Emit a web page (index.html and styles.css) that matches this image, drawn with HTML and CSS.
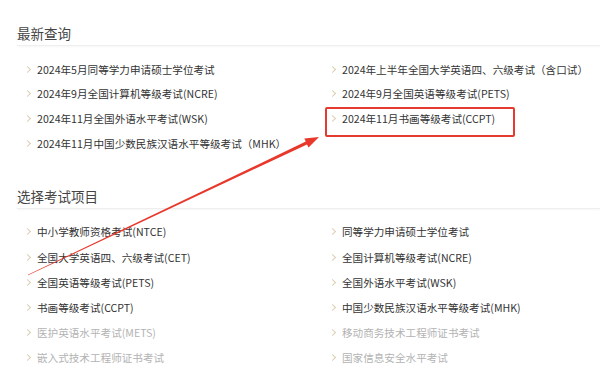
FILE: index.html
```html
<!DOCTYPE html>
<html lang="zh-CN">
<head>
    <meta charset="UTF-8">
    <meta name="viewport" content="width=device-width, initial-scale=1.0">
    <title>考试查询</title>
    <link rel="stylesheet" href="styles.css">
</head>
<body>
    <div class="page">
        <!-- 最新查询 -->
        <div class="section">
            <h2 class="section-title">最新查询</h2>
            <ul class="list list-latest">
                <li class="item">2024年5月同等学力申请硕士学位考试</li>
                <li class="item">2024年上半年全国大学英语四、六级考试（含口试）</li>
                <li class="item">2024年9月全国计算机等级考试(NCRE)</li>
                <li class="item">2024年9月全国英语等级考试(PETS)</li>
                <li class="item">2024年11月全国外语水平考试(WSK)</li>
                <li class="item marked">2024年11月书画等级考试(CCPT)</li>
                <li class="item">2024年11月中国少数民族汉语水平等级考试（MHK）</li>
            </ul>
        </div>

        <!-- 选择考试项目 -->
        <div class="section section-exams">
            <h2 class="section-title">选择考试项目</h2>
            <ul class="list">
                <li class="item">中小学教师资格考试(NTCE)</li>
                <li class="item">同等学力申请硕士学位考试</li>
                <li class="item">全国大学英语四、六级考试(CET)</li>
                <li class="item">全国计算机等级考试(NCRE)</li>
                <li class="item">全国英语等级考试(PETS)</li>
                <li class="item">全国外语水平考试(WSK)</li>
                <li class="item">书画等级考试(CCPT)</li>
                <li class="item">中国少数民族汉语水平等级考试(MHK)</li>
                <li class="item disabled">医护英语水平考试(METS)</li>
                <li class="item disabled">移动商务技术工程师证书考试</li>
                <li class="item disabled">嵌入式技术工程师证书考试</li>
                <li class="item disabled">国家信息安全水平考试</li>
            </ul>
        </div>

        <!-- 标注箭头 -->
        <svg class="annotation" width="600" height="376" viewBox="0 0 600 376">
            <polygon fill="#e8382c" points="27.9,274.7 28.1,275.3 307.0,144.4 308.5,147.5 319,137 304.3,138.5 305.8,141.6"/>
        </svg>
    </div>
</body>
</html>
```

FILE: styles.css
```css
* {
    margin: 0;
    padding: 0;
    box-sizing: border-box;
}
ul {
    list-style: none;
}
body {
    background: #fff;
    font-family: "Microsoft YaHei", "Noto Sans CJK SC", "Liberation Sans", sans-serif;
    color: #333;
}

.page {
    position: relative;
    width: 600px;
    height: 376px;
    padding: 22px 0 0 17px;
    overflow: hidden;
}
.section-title {
    height: 24px;
    font-size: 13.5px;
    font-weight: normal;
    line-height: 22px;
    color: #444;
    border-bottom: 1px solid #eee;
    box-shadow: 0 1px 2px rgba(0, 0, 0, 0.04);
}
.list {
    display: grid;
    grid-template-columns: 305px 1fr;
    padding: 11px 0 0 8px;
}
.section-exams {
    margin-top: 30px;
}
.section-exams .list {
    padding-top: 10px;
}
.item {
    position: relative;
    display: flex;
    align-items: center;
    height: 24.6px;
    font-size: 10.6px;
    color: #333;
}
.section-exams .item {
    height: 25.2px;
}
.item::before {
    content: "";
    flex: 0 0 auto;
    width: 4px;
    height: 4px;
    margin: 0 7px 0 0;
    border-top: 1.3px solid #dccfb3;
    border-right: 1.3px solid #dccfb3;
    transform: rotate(45deg);
}
.item.disabled {
    color: #b3b3b3;
}
.marked::after {
    content: "";
    position: absolute;
    left: -5px;
    top: 1px;
    width: 186px;
    height: 26px;
    border: 2px solid #e53a30;
    border-radius: 2px;
}
.annotation {
    position: absolute;
    left: 0;
    top: 0;
    pointer-events: none;
}
```
